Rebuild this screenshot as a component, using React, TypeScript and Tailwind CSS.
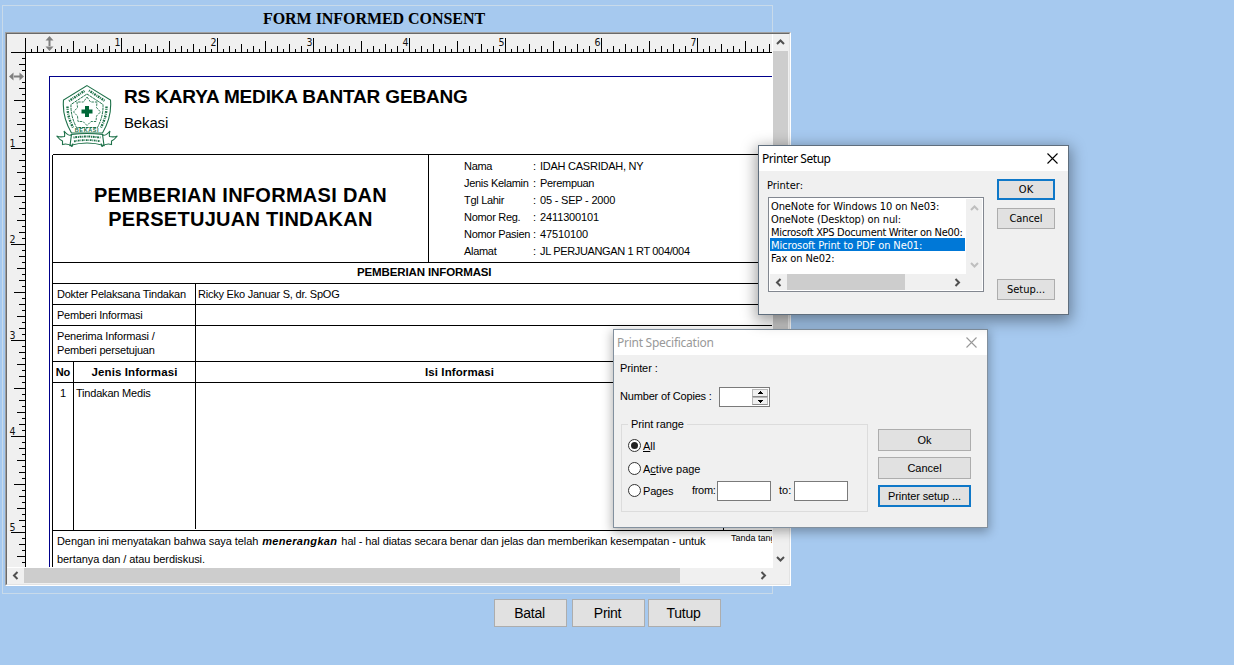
import React from "react";
import type { ReactNode } from "react";

const arial = "font-['Liberation_Sans',Arial,sans-serif]";
const tahoma = "font-['DejaVu_Sans_Condensed','DejaVu_Sans',Tahoma,sans-serif] [font-stretch:condensed]";
const segoe = "font-['Noto_Sans','Open_Sans',sans-serif]";

type Direction = "up" | "down" | "left" | "right";

const chevrons: Record<Direction, string> = {
  up: "M1 6 L4.5 2.5 L8 6",
  down: "M1 3 L4.5 6.5 L8 3",
  left: "M6.5 1 L3 4.5 L6.5 8",
  right: "M2.5 1 L6 4.5 L2.5 8",
};

function Chevron({ dir, color = "#505050" }: { dir: Direction; color?: string }) {
  return (
    <svg width="9" height="9" viewBox="0 0 9 9" fill="none" stroke={color} strokeWidth="2">
      <path d={chevrons[dir]} />
    </svg>
  );
}

function tickLength(i: number) {
  if (i % 16 === 0) return 14;
  if (i % 8 === 0) return 11;
  if (i % 4 === 0) return 8;
  if (i % 2 === 0) return 6;
  return 3;
}

function TopRuler() {
  const ticks = Array.from({ length: 124 }, (_, i) => i + 1);
  return (
    <svg width="765" height="19" viewBox="7 34 765 19" className="block shrink-0 bg-[#f0f0f0]" shapeRendering="crispEdges">
      <rect x="11" y="52" width="761" height="1" fill="#000" />
      <rect x="25" y="38" width="1" height="15" fill="#000" />
      {ticks.filter((i) => i !== 4).map((i) => (
        <rect key={i} x={25 + i * 6} y={52 - tickLength(i)} width="1" height={tickLength(i)} fill="#000" />
      ))}
      {[1, 2, 3, 4, 5, 6, 7].map((n) => (
        <text key={n} x={21.5 + n * 96} y="46" textAnchor="middle" fontSize="10.5" className={tahoma} fill="#111">
          {n}
        </text>
      ))}
      <path d="M45.500 40.500 L49.500 36 L53.500 40.500 Z M45.500 46.500 L49.500 51 L53.500 46.500 Z M48.500 40 h2 v7 h-2 Z" fill="#808080" shapeRendering="auto" />
    </svg>
  );
}

function SideRuler() {
  const ticks = Array.from({ length: 85 }, (_, i) => i + 1);
  return (
    <svg width="19" height="514" viewBox="7 53 19 514" className="block shrink-0 bg-[#f0f0f0]" shapeRendering="crispEdges">
      <rect x="25" y="53" width="1" height="514" fill="#000" />
      {ticks.filter((i) => i !== 4).map((i) => (
        <rect key={i} x={25 - tickLength(i)} y={52 + i * 6} width={tickLength(i)} height="1" fill="#000" />
      ))}
      {[1, 2, 3, 4, 5].map((n) => (
        <text key={n} x="12.5" y={50.5 + n * 96} textAnchor="middle" fontSize="10.5" className={tahoma} fill="#111">
          {n}
        </text>
      ))}
      <path d="M13.500 72.500 L9 76.500 L13.500 80.500 Z M19.500 72.500 L24 76.500 L19.500 80.500 Z M13 75.500 h7 v2 h-7 Z" fill="#808080" shapeRendering="auto" />
    </svg>
  );
}

function Logo() {
  return (
    <svg width="62" height="62" viewBox="0 0 62 62" fill="none" stroke="#1c7048" strokeWidth="1.1" className="shrink-0">
      <path d="M31 0.600 L54.500 15 Q56 32 46.500 48 H15.500 Q6 32 7.500 15 Z" />
      <path d="M31 9 L47 19.500 Q47.500 31 41.500 42.500 H20.500 Q14.500 31 15 19.500 Z" strokeWidth="1" strokeDasharray="3 0.700" />
      <path d="M13 16 L29 5.600" strokeWidth="2.400" strokeDasharray="0.900 0.900 1.800 0.800" />
      <path d="M33 5.600 L49 16" strokeWidth="2.400" strokeDasharray="0.900 0.900 1.800 0.800" />
      <path d="M11.500 21.500 Q11.500 32 17 42.500" strokeWidth="2.400" strokeDasharray="1.800 0.900 0.800 1.100" />
      <path d="M50.500 21.500 Q50.500 32 45 42.500" strokeWidth="2.400" strokeDasharray="1.800 0.900 0.800 1.100" />
      <path
        d="M31 12 L34.500 17 L41 17 L40.500 22.500 L44.500 27 L40.500 31 L40 36.500 L35 36.500 L31 40.500 L27 36.500 L22 36.500 L21.500 31 L17.500 27 L21.500 22.500 L21 17 L27.500 17 Z"
        strokeWidth="0.900"
        strokeDasharray="2.500 1"
      />
      <path d="M29 21 h4 v3.500 h3.500 v4 H33 v3.500 h-4 v-3.500 h-3.500 v-4 H29 Z" fill="#006838" stroke="none" />
      <text x="31" y="47.300" textAnchor="middle" fontSize="5.500" fill="#1c7048" stroke="none" fontWeight="bold" letterSpacing="0.600" className={arial}>
        BEKASI
      </text>
      <path d="M15.500 49.500 Q31 47.500 46.500 49.500 L48 60.500 Q31 55.500 14 60.500 Z" />
      <path d="M17.500 52.600 Q31 50.500 44.500 52.600" strokeWidth="2" strokeDasharray="1 0.700 1.900 0.800" />
      <path d="M18 56.300 Q31 53.800 44.500 56.300" strokeWidth="1.800" strokeDasharray="1.700 0.800 0.800 0.700" />
      <path d="M15.500 49.500 Q13 52 8 46 Q9 49 8.500 51.500 Q4 52.500 0.600 51 Q4 55 6.500 56 L6.500 59.500 Q12 58 16 61.500 L17 58.500" />
      <path d="M46.500 49.500 Q49 52 54 46 Q53 49 53.500 51.500 Q58 52.500 61.400 51 Q58 55 55.500 56 L55.500 59.500 Q50 58 46 61.500 L45 58.500" />
    </svg>
  );
}

const patient = [
  ["Nama", "IDAH CASRIDAH, NY", "tracking-[-0.25px]"],
  ["Jenis Kelamin", "Perempuan", "tracking-[-0.3px]"],
  ["Tgl Lahir", "05 - SEP - 2000", "tracking-[-0.2px]"],
  ["Nomor Reg.", "2411300101", "tracking-[-0.13px]"],
  ["Nomor Pasien", "47510100", "tracking-[-0.1px]"],
  ["Alamat", "JL PERJUANGAN 1 RT 004/004", "tracking-[-0.35px]"],
];

function Report() {
  return (
    <div className={`${arial} h-[514px] w-[746px] overflow-hidden bg-white pl-[23px] pt-[23px] text-[11px] text-black`}>
      <div className="h-[600px] w-[900px] border-l border-t border-[#00008b] pl-[2px]">
        <header className="flex h-[77px] pl-[4px] pt-[8px]">
          <Logo />
          <div className="flex flex-col whitespace-nowrap pl-[6px] pt-[1px]">
            <h1 className="text-[19px] font-bold leading-[22px] tracking-[-0.16px]">RS KARYA MEDIKA BANTAR GEBANG</h1>
            <p className="pt-[5px] text-[15px] leading-[20px] tracking-[-0.15px]">Bekasi</p>
          </div>
        </header>
        <div className="ml-[1px] h-px bg-black" />
        <div className="border-l border-black">
          <div className="flex h-[108px] border-b border-black">
            <h2 className="flex w-[376px] flex-col justify-center border-r border-black pb-[4px] text-center text-[20px] font-bold leading-[24px] tracking-[0.28px]">
              <span>PEMBERIAN INFORMASI DAN</span>
              <span>PERSETUJUAN TINDAKAN</span>
            </h2>
            <div className="flex flex-col whitespace-nowrap pl-[35px] pt-[3px]">
              {patient.map(([label, value, tracking]) => (
                <div key={label} className="flex h-[17px] items-center">
                  <span className="w-[69px] tracking-[-0.3px]">{label}</span>
                  <span className="w-[7px]">:</span>
                  <span className={tracking}>{value}</span>
                </div>
              ))}
            </div>
          </div>
          <div className="flex h-[21px] items-center border-b border-black pl-[304px] text-[11.5px] font-bold tracking-[-0.12px]">
            <span>PEMBERIAN INFORMASI</span>
          </div>
          <div className="flex h-[21px] border-b border-black tracking-[-0.23px]">
            <div className="flex w-[143px] items-center whitespace-nowrap border-r border-black pl-[4px]">Dokter Pelaksana Tindakan</div>
            <div className="flex items-center pl-[2px]">Ricky Eko Januar S, dr. SpOG</div>
          </div>
          <div className="flex h-[21px] border-b border-black">
            <div className="flex w-[143px] items-center border-r border-black pl-[4px] tracking-[-0.22px]">Pemberi Informasi</div>
          </div>
          <div className="flex h-[36px] border-b border-black">
            <div className="w-[143px] border-r border-black pl-[4px] pt-[3px] leading-[14px] tracking-[-0.2px]">
              Penerima Informasi /<br />
              Pemberi persetujuan
            </div>
          </div>
          <div className="flex h-[21px] border-b border-black font-bold">
            <div className="flex w-[21px] items-center justify-center border-r border-black">No</div>
            <div className="flex w-[122px] items-center justify-center border-r border-black pt-[1px] text-[11.5px] tracking-[0.1px]">Jenis Informasi</div>
            <div className="flex w-[528px] items-center justify-center border-r border-black pt-[1px] text-[11.5px] tracking-[0.1px]">Isi Informasi</div>
          </div>
          <div className="flex h-[148px] border-b border-black leading-[13px]">
            <div className="w-[21px] border-r border-black pt-[4px] text-center">1</div>
            <div className="mb-[1px] w-[122px] border-r border-black pl-[2px] pt-[4px] tracking-[-0.2px]">Tindakan Medis</div>
            <div className="w-[528px] border-r border-black" />
          </div>
          <div className="flex whitespace-nowrap">
            <p className="w-[678px] pl-[4px] pt-[1px] leading-[18px] tracking-[-0.08px]">
              Dengan ini menyatakan bahwa saya telah{" "}
              <b className="ml-[1px] mr-[1px] italic tracking-[0.33px]">menerangkan</b>{" "}
              <span className="tracking-[-0.09px]">hal - hal diatas secara benar dan jelas dan memberikan kesempatan - untuk</span>
              <br />
              bertanya dan / atau berdiskusi.
            </p>
            <p className="text-[9px] leading-[14px]">Tanda tangan</p>
          </div>
        </div>
      </div>
    </div>
  );
}

function Preview() {
  return (
    <div className="ml-[2px] h-[554px] w-[786px] border border-b-white border-l-[#a0a0a0] border-r-white border-t-[#a0a0a0]">
      <div className="flex h-full w-full flex-col border border-b-[#e3e3e3] border-l-[#696969] border-r-[#e3e3e3] border-t-[#696969] bg-[#f0f0f0]">
        <div className="flex h-[533px]">
          <div className="w-[765px]">
            <TopRuler />
            <div className="flex">
              <SideRuler />
              <Report />
            </div>
          </div>
          <div className="w-px bg-white" />
          <div className="flex w-[15px] flex-col items-center">
            <div className="flex h-[17px] items-center">
              <Chevron dir="up" />
            </div>
            <div className="h-[370px] w-full bg-[#cdcdcd]" />
            <div className="flex flex-1 items-end pb-[4px]">
              <Chevron dir="down" />
            </div>
          </div>
        </div>
        <div className="h-px w-[766px] bg-white" />
        <div className="flex h-[15px] items-center">
          <div className="flex w-[17px] justify-center">
            <Chevron dir="left" />
          </div>
          <div className="h-full w-[656px] bg-[#cdcdcd]" />
          <div className="pl-[79px]">
            <Chevron dir="right" />
          </div>
        </div>
      </div>
    </div>
  );
}

function Button({ children, className = "", focused = false }: { children: ReactNode; className?: string; focused?: boolean }) {
  return (
    <button
      type="button"
      className={`flex shrink-0 items-center justify-center whitespace-nowrap bg-[#e1e1e1] text-black ${
        focused ? "border-2 border-[#0f78c8]" : "border border-[#adadad]"
      } ${className}`}
    >
      {children}
    </button>
  );
}

function CloseIcon({ color }: { color: string }) {
  return (
    <svg width="11" height="11" viewBox="0 0 11 11" fill="none" stroke={color} strokeWidth="1.1">
      <path d="M0.500 0.500 L10.500 10.500 M10.500 0.500 L0.500 10.500" />
    </svg>
  );
}

const printers = [
  { name: "OneNote for Windows 10 on Ne03:" },
  { name: "OneNote (Desktop) on nul:" },
  { name: "Microsoft XPS Document Writer on Ne00:" },
  { name: "Microsoft Print to PDF on Ne01:", selected: true },
  { name: "Fax on Ne02:" },
];

function PrinterSetup() {
  return (
    <section className={`${tahoma} absolute left-[758px] top-[145px] h-[170px] w-[311px] border border-[#5f6e7d] bg-[#f0f0f0] text-[11px] text-black shadow-[0_4px_14px_2px_rgba(0,0,0,0.38)]`}>
      <header className="flex h-[25px] items-center justify-between bg-white pl-[3px] pr-[10px]">
        <span className={`${segoe} text-[12px] tracking-[-0.45px]`}>Printer Setup</span>
        <CloseIcon color="#000" />
      </header>
      <div className="flex pl-[9px]">
        <div className="w-[216px] pt-[8px]">
          <div className="-ml-px h-[18px] leading-[14px]">Printer:</div>
          <div className="h-[95px] border border-[#828790] bg-white p-[1px]">
            <div className="flex h-[75px]">
              <ul className="w-[195px] overflow-hidden whitespace-nowrap">
                {printers.map((p) => (
                  <li
                    key={p.name}
                    className={`h-[13px] pl-[1px] leading-[15px] ${
                      p.name.includes("XPS") ? "tracking-[-0.3px]" : "tracking-[-0.1px]"
                    } ${p.selected ? "bg-[#0078d7] text-white" : ""}`}
                  >
                    {p.name}
                  </li>
                ))}
              </ul>
              <div className="ml-[1px] flex w-[16px] flex-col items-center justify-between bg-[#f0f0f0] py-[5px]">
                <Chevron dir="up" color="#bfbfbf" />
                <Chevron dir="down" color="#bfbfbf" />
              </div>
            </div>
            <div className="flex h-[16px] items-center bg-[#f0f0f0]">
              <div className="flex w-[17px] justify-center">
                <Chevron dir="left" />
              </div>
              <div className="h-full w-[118px] bg-[#cdcdcd]" />
              <div className="pl-[48px]">
                <Chevron dir="right" />
              </div>
            </div>
          </div>
        </div>
        <div className="flex flex-col pl-[13px] pt-[8px]">
          <Button focused className="h-[21px] w-[58px] pt-[2px]">OK</Button>
          <Button className="mt-[8px] h-[21px] w-[58px] pt-[2px] tracking-[-0.1px]">Cancel</Button>
          <Button className="mt-[50px] h-[21px] w-[58px] pt-[2px]">Setup...</Button>
        </div>
      </div>
    </section>
  );
}

function Radio({ checked = false, children }: { checked?: boolean; children: ReactNode }) {
  return (
    <label className="flex items-center gap-[2px] whitespace-nowrap">
      <span className="flex h-[13px] w-[13px] items-center justify-center rounded-full border border-[#333] bg-white">
        {checked && <span className="h-[7px] w-[7px] rounded-full bg-[#222]" />}
      </span>
      <span className="pt-[2px]">{children}</span>
    </label>
  );
}

function PrintSpecification() {
  return (
    <section className={`${arial} absolute left-[613px] top-[329px] h-[199px] w-[375px] border border-[#82909e] bg-[#f0f0f0] text-[11px] text-black shadow-[0_3px_10px_1px_rgba(0,0,0,0.3)]`}>
      <header className="flex h-[25px] items-center justify-between bg-white pl-[3px] pr-[10px]">
        <span className={`${segoe} text-[12px] tracking-[-0.26px] text-[#999]`}>Print Specification</span>
        <CloseIcon color="#999" />
      </header>
      <div className="pl-[6px] pt-[6px] leading-[14px] tracking-[-0.1px]">Printer :</div>
      <div className="mt-[12px] flex h-[20px] items-center pl-[6px]">
        <span className="w-[99px] pb-[2px] tracking-[-0.17px]">Number of Copies :</span>
        <div className="flex h-[20px] w-[51px] justify-end border border-[#7a7a7a] bg-white p-[1px]">
          <div className="flex h-[16px] w-[16px] flex-col bg-[#f0f0f0]">
            <span className="flex h-[8px] items-center justify-center border border-[#b8b8b8] border-b-[#8c8c8c]">
              <svg width="7" height="4" viewBox="0 0 7 4" shapeRendering="crispEdges"><path d="M3 0 h1 v1 h1 v1 h1 v1 H1 v-1 h1 v-1 h1 Z" /></svg>
            </span>
            <span className="flex h-[8px] items-center justify-center border border-[#b8b8b8] border-b-[#8c8c8c]">
              <svg width="7" height="4" viewBox="0 0 7 4" shapeRendering="crispEdges"><path d="M1 1 h5 v1 h-1 v1 h-1 v1 h-1 v-1 h-1 v-1 h-1 Z" /></svg>
            </span>
          </div>
        </div>
      </div>
      <div className="flex pl-[7px] pt-[10px]">
        <fieldset className="h-[95px] w-[247px] border border-[#dcdcdc] pl-[6px]">
          <legend className="px-[3px] leading-[14px] tracking-[-0.1px]">Print range</legend>
          <div className="mt-[6px] flex h-[16px] items-center">
            <Radio checked><u>A</u>ll</Radio>
          </div>
          <div className="mt-[7px] flex h-[16px] items-center">
            <Radio>A<u>c</u>tive page</Radio>
          </div>
          <div className="mt-[4px] flex h-[20px] items-center">
            <div className="w-[64px] tracking-[-0.2px]"><Radio>Pa<u>g</u>es</Radio></div>
            <span className="w-[25px] tracking-[-0.3px]">from:</span>
            <span className="mt-px h-[20px] w-[54px] border border-[#7a7a7a] bg-white" />
            <span className="w-[23px] pl-[8px]">to:</span>
            <span className="mt-px h-[20px] w-[54px] border border-[#7a7a7a] bg-white" />
          </div>
        </fieldset>
        <div className="flex flex-col gap-[6px] pl-[10px] pt-[12px]">
          <Button className="h-[22px] w-[93px]">Ok</Button>
          <Button className="h-[22px] w-[93px]">Cancel</Button>
          <Button focused className="h-[22px] w-[93px] tracking-[-0.1px]">Printer setup ...</Button>
        </div>
      </div>
    </section>
  );
}

export default function App() {
  return (
    <div className="relative h-[665px] w-[1234px] overflow-hidden bg-[#a6c9ef] pl-[2px] pt-[5px]">
      <main className="h-[589px] w-[771px] border border-[#c8daea]">
        <h1 className="h-[26px] pl-[260px] font-['Liberation_Serif','Times_New_Roman',serif] text-[16px] font-bold leading-[26px] tracking-[-0.05px] text-black">
          FORM INFORMED CONSENT
        </h1>
        <Preview />
      </main>
      <nav className={`${arial} flex pl-[492px] pt-[5px] text-[14px] tracking-[-0.3px]`}>
        <Button className="h-[28px] w-[73px] pr-[2px]">Batal</Button>
        <Button className="ml-[5px] h-[28px] w-[73px] pr-[2px]">Print</Button>
        <Button className="ml-[3px] h-[28px] w-[73px] pr-[2px]">Tutup</Button>
      </nav>
      <PrintSpecification />
      <PrinterSetup />
    </div>
  );
}
